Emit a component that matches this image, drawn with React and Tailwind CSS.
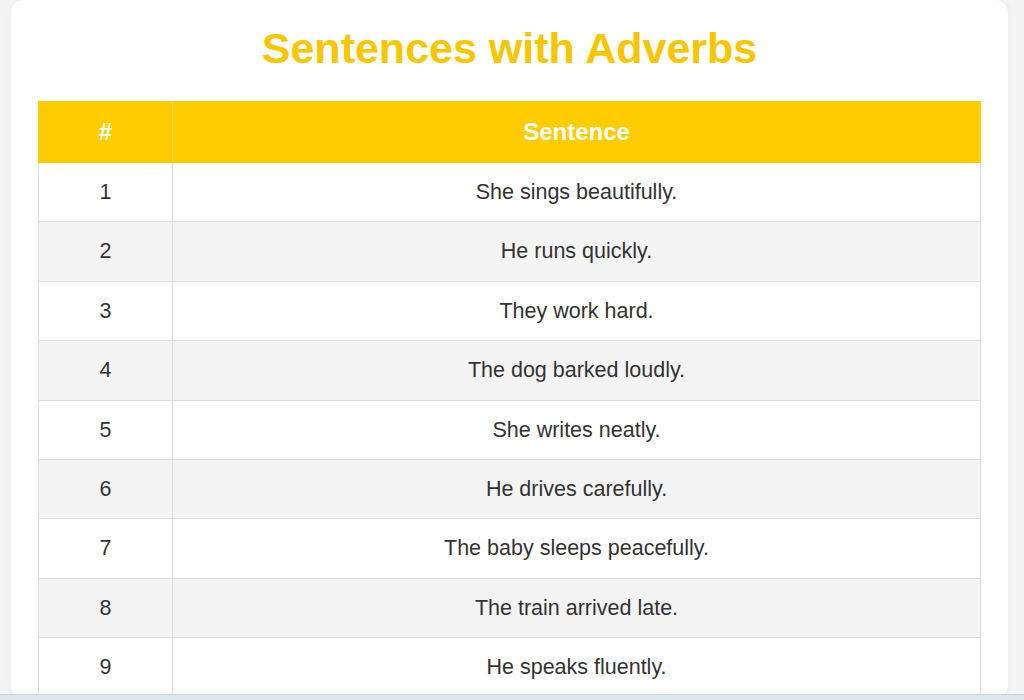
import React from "react";

const sentences = [
  "She sings beautifully.",
  "He runs quickly.",
  "They work hard.",
  "The dog barked loudly.",
  "She writes neatly.",
  "He drives carefully.",
  "The baby sleeps peacefully.",
  "The train arrived late.",
  "He speaks fluently.",
];

export default function App() {
  return (
    <div
      className="h-[700px] flex flex-col bg-[#f4f4f4] overflow-hidden"
      style={{ fontFamily: '"Liberation Sans", Arial, sans-serif' }}
    >
      <div className="flex-1 overflow-hidden">
        <div className="ml-[11px] w-[997px] rounded-xl bg-white px-[27px] shadow-[0_0_6px_rgba(0,0,0,0.05)]">
          <div className="h-[101px] flex items-center justify-center pb-1">
            <h1 className="text-[43px] font-bold text-[#f7c600] leading-none">
              Sentences with Adverbs
            </h1>
          </div>
          <table className="w-full border-collapse text-center">
            <thead>
              <tr className="bg-[#ffcc00] text-white">
                <th className="w-[134px] h-[61px] border border-[#ffcc00] border-r-[#f0d260] text-[24px] font-bold">
                  #
                </th>
                <th className="h-[61px] border border-[#ffcc00] text-[24px] font-bold">
                  Sentence
                </th>
              </tr>
            </thead>
            <tbody>
              {sentences.map((s, i) => (
                <tr key={i} className={i % 2 === 1 ? "bg-[#f4f4f4]" : "bg-white"}>
                  <td className="h-[59.4px] border border-[#dddddd] text-[21.5px] text-[#333333]">
                    {i + 1}
                  </td>
                  <td className="h-[59.4px] border border-[#dddddd] text-[21.5px] text-[#333333]">
                    {s}
                  </td>
                </tr>
              ))}
            </tbody>
          </table>
        </div>
      </div>
      <div className="h-[6px] bg-[#dfe5ee] border-t border-[#c9d1dc]" />
    </div>
  );
}
